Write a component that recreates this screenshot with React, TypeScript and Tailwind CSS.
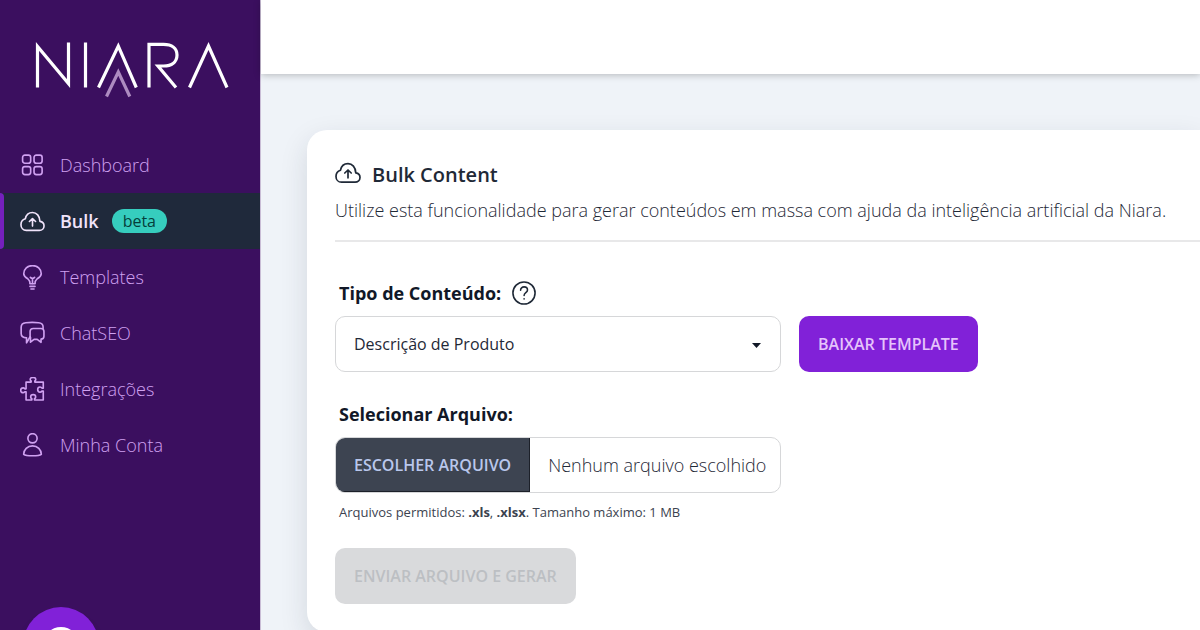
import type { ReactNode } from "react";

const Icon = ({ className, children }: { className?: string; children: ReactNode }) => (
  <svg
    className={className}
    viewBox="0 0 26 26"
    fill="none"
    stroke="currentColor"
    strokeWidth="1.7"
    strokeLinecap="round"
    strokeLinejoin="round"
    aria-hidden="true"
  >
    {children}
  </svg>
);

const cloud = (
  <>
    <path d="M6.5 22.2h13.6c2.7 0 4.9-2 4.9-4.6 0-2.5-1.8-4.4-4.2-4.7C20.6 7.2 17.2 3.6 13 3.6c-3.7 0-6.7 2.5-7.5 6.6C2.9 11 1 13.2 1 16.4c0 3.3 2.3 5.8 5.5 5.8Z" />
    <path d="M13 17.8v-7.300M9.800 13 13 10l3.200 3" />
  </>
);

const items = [
  {
    name: "Dashboard",
    icon: (
      <>
        <rect x="2.7" y="2.2" width="8.4" height="8.4" rx="2.4" />
        <rect x="14.6" y="2.2" width="8.4" height="8.4" rx="2.4" />
        <rect x="2.7" y="14.1" width="8.4" height="8.4" rx="2.4" />
        <rect x="14.6" y="14.1" width="8.4" height="8.4" rx="2.4" />
      </>
    ),
  },
  { name: "Bulk", badge: "beta", icon: cloud },
  {
    name: "Templates",
    icon: (
      <>
        <path d="M10.3 19.500v-1.200c0-1.600-.8-2.600-2.200-4C5.200 12.500 3.900 11.700 3.900 9c0-4.800 4-8.400 9.100-8.400S22.100 4.200 22.100 9c0 2.700-1.300 3.500-4.200 5.300-1.400 1.400-2.200 2.400-2.200 4v1.200Z" />
        <path d="M13 19.200v-5.300M10.800 12.900c.7.700 1.400 1 2.200 1s1.500-.3 2.200-1M10.400 22.300h5.200M11.400 25h3.200" />
      </>
    ),
  },
  {
    name: "ChatSEO",
    icon: (
      <>
        <path d="M10.500 16.400 6.800 22.700v-5.100c-3.600-.3-5.600-1.600-5.600-4.600V6.400c0-2.900 1.900-4.300 4.800-4.600 4.600-.5 9-.5 13.300 0 2.900.3 4.700 1.700 4.700 4.200v1.900" />
        <path d="M13.800 7.800h8c1.900 0 3.100 1.300 3.100 3.100v4.900c0 1.900-1.100 2.900-3 3.100v3.300l-4-3.100h-3.300L10.900 22v-4.800c-.3-.5-.4-1-.4-1.600V11c0-1.900 1.300-3.200 3.300-3.200Z" />
      </>
    ),
  },
  {
    name: "Integrações",
    icon: (
      <path d="M6.300 5.300h5.300V4.100c-.7-.4-1-1-1-1.500C10.600 1.200 11.800.4 13.500.4s2.900.8 2.900 2.200c0 .5-.3 1.100-1 1.500v1.200h8.800v6.300h-1.300c-.6-.9-1.300-1.200-2.100-1.200-1.400 0-2.400 1.100-2.400 2.700s1 2.700 2.400 2.700c.8 0 1.500-.3 2.100-1.200h1.300v9.300h-9.100v-1.300c.8-.5 1.200-1.100 1.200-1.900 0-1.400-1.100-2.400-2.600-2.400s-2.600 1-2.600 2.400c0 .8.400 1.400 1.200 1.900v1.300H6.300v-8.600H5c-.5.700-1.100 1-1.800 1-1.500 0-2.500-.9-2.500-2.500s1-2.500 2.500-2.500c.7 0 1.300.3 1.800 1h1.300Z" />
    ),
  },
  {
    name: "Minha Conta",
    icon: (
      <>
        <circle cx="13" cy="5.500" r="4.800" />
        <path d="M3.800 22.200c0-5 4-8.800 9.200-8.800s9.200 3.800 9.200 8.800c-2.700 2-15.700 2-18.400 0Z" />
      </>
    ),
  },
];

const Logo = () => (
  <svg
    className="w-[194px] h-14"
    viewBox="35 42 194 56"
    fill="none"
    stroke="#fff"
    strokeWidth="3.2"
    role="img"
    aria-label="Niara"
  >
    <path d="M37.5 87.500V46.500L68.500 83.500V42.500" />
    <path d="M85.500 42.500v45" />
    <path d="M98.500 87.500 118.300 46l18 41.500" />
    <path d="M149 87.500V44.300h14.500c8.500 0 13.500 4 13.500 10.700 0 7-5.500 11-13.500 11H158l18 21.500" />
    <path d="M189.500 87.500 208.500 46l18.500 41.500" />
    <path d="M106.500 96.500 118.300 72l11.500 24.500" stroke="#ad8bc0" />
  </svg>
);

const Sidebar = () => (
  <aside className="w-[261px] shrink-0 bg-[#3b0f5f] border-r border-[#c9bdd6]">
    <a href="#" className="flex h-[137px] pl-[35px] pt-[42px]">
      <Logo />
    </a>
    <nav>
      {items.map((item) => (
        <a
          key={item.name}
          href="#"
          className={
            item.badge
              ? "relative flex items-center h-14 pl-5 bg-[#1f293b] text-[#f1e4fb] font-semibold"
              : "flex items-center h-14 pl-5 text-[#d0a1f1] font-[350]"
          }
        >
          {item.badge && (
            <span className="absolute left-0 inset-y-0 w-1 rounded-r bg-[#7420bd]" />
          )}
          <Icon className="size-[25px] mr-[15px]">{item.icon}</Icon>
          {item.name}
          {item.badge && (
            <span className="ml-[13px] h-6 px-[11px] flex items-center rounded-full bg-[#36cdbe] text-[#053f3b] text-base font-medium">
              {item.badge}
            </span>
          )}
        </a>
      ))}
    </nav>
  </aside>
);

const App = () => {
  return (
    <div className="flex min-h-screen bg-[#eff3f8] font-['Open_Sans','Noto_Sans',sans-serif] text-lg text-[#1f2937]">
      <Sidebar />
      <div className="flex-1 min-w-0">
        <header className="h-[74px] bg-white shadow-[0_1px_7px_rgba(0,0,0,0.25)]" />
        <main className="pt-14 pl-[46px]">
          <section className="bg-white rounded-l-[20px] p-7 pr-0 shadow-[0_10px_28px_rgba(31,41,55,0.13)]">
            <div className="border-b-2 border-[#e8e8e9] pb-3">
              <h1 className="flex items-center h-[34px] text-xl font-[550]">
                <Icon className="size-[26px] mr-[11px] mb-1">{cloud}</Icon>
                Bulk Content
              </h1>
              <p className="leading-9 whitespace-nowrap font-[350]">
                Utilize esta funcionalidade para gerar conteúdos em massa com ajuda da inteligência artificial da Niara.
              </p>
            </div>

            <form className="pt-[33px]">
              <div className="flex items-center h-9 mb-[5px] pl-1">
                <label htmlFor="tipo" className="font-bold text-[#111827]">
                  Tipo de Conteúdo:
                </label>
                <button type="button" aria-label="Ajuda" className="ml-[11px]">
                  <Icon className="size-6">
                    <circle cx="13" cy="13" r="12" />
                    <path d="M9.300 9.900c0-2.100 1.600-3.500 3.800-3.500 2.100 0 3.700 1.300 3.700 3.300 0 3-3.700 3-3.700 6M13.100 19.300v.2" />
                  </Icon>
                </button>
              </div>
              <div className="flex gap-[18px]">
                <div className="relative w-[446px]">
                  <select
                    id="tipo"
                    className="appearance-none w-full h-14 pl-[18px] rounded-[10px] border border-[#d6d7d9] bg-white text-base font-medium"
                  >
                    <option>Descrição de Produto</option>
                  </select>
                  <svg className="absolute right-5 top-[27px] w-[9px] h-[5px]" viewBox="0 0 9 5" aria-hidden="true">
                    <path d="M0 0h9L4.500 5Z" fill="#111827" />
                  </svg>
                </div>
                <button
                  type="button"
                  className="h-14 px-[19px] rounded-[10px] bg-[#8121d8] text-[#e5c3fb] text-base font-semibold"
                >
                  BAIXAR TEMPLATE
                </button>
              </div>

              <div className="flex items-center h-9 mt-6 mb-[5px] pl-1">
                <label htmlFor="arquivo" className="font-bold text-[#111827]">
                  Selecionar Arquivo:
                </label>
              </div>
              <label className="flex w-[446px] h-14 rounded-[10px] border border-[#d6d7d9] overflow-hidden whitespace-nowrap">
                <input id="arquivo" type="file" accept=".xls,.xlsx" className="sr-only" />
                <span className="flex items-center px-[18px] bg-[#3d4451] border-r border-b border-[#1c2029] text-[#b9c7ec] text-base font-semibold">
                  ESCOLHER ARQUIVO
                </span>
                <span className="flex items-center pl-[18px] font-[350]">Nenhum arquivo escolhido</span>
              </label>
              <p className="h-[39px] pl-1 flex items-center text-[13px] text-[#3c4350]">
                <span>
                  Arquivos permitidos: <b>.xls</b>, <b>.xlsx</b>. Tamanho máximo: 1 MB
                </span>
              </p>
              <button
                type="submit"
                disabled
                className="mt-4 h-14 px-[19px] rounded-[10px] bg-[#d9dadc] text-[#bcbfc3] text-base font-semibold"
              >
                ENVIAR ARQUIVO E GERAR
              </button>
            </form>
          </section>
        </main>
      </div>

      <button
        type="button"
        aria-label="Abrir chat"
        className="fixed left-[23px] -bottom-[53px] size-[76px] rounded-full bg-[#8121d8] flex justify-center pt-5 shadow-lg"
      >
        <span className="size-9 rounded-full bg-white" />
      </button>
    </div>
  );
};

export default App;
